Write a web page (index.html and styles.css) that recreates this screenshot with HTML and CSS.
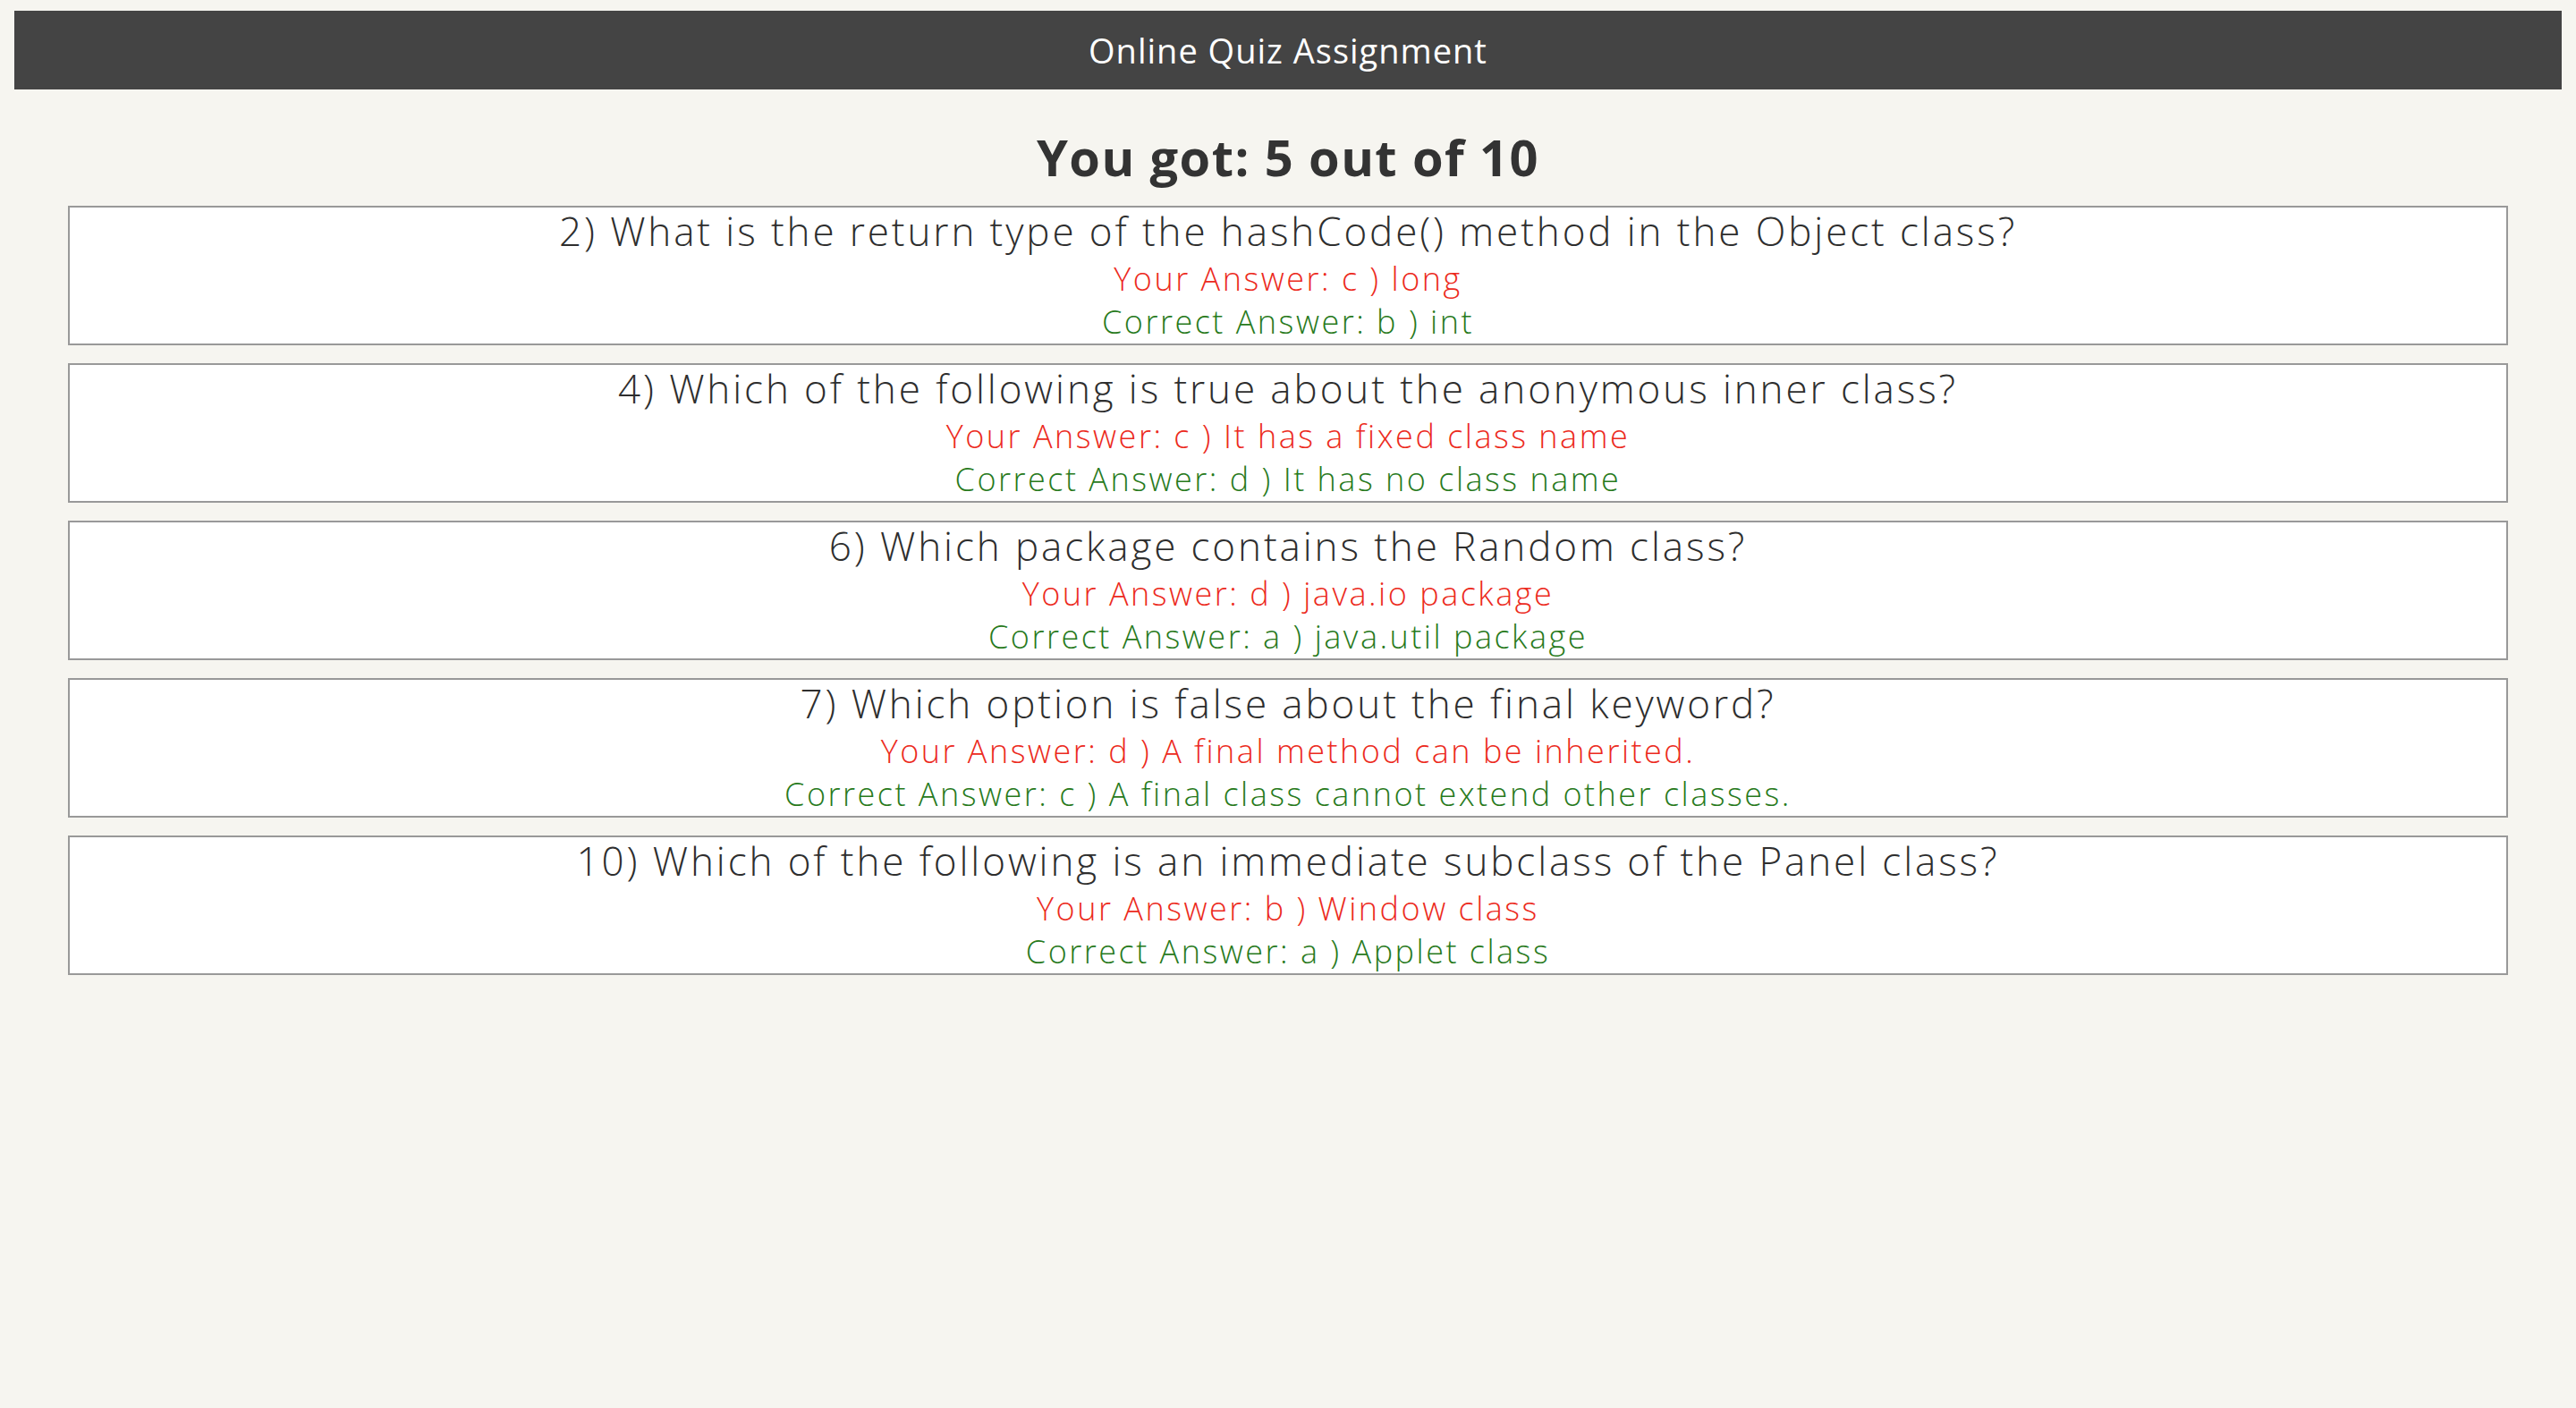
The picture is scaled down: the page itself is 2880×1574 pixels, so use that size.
FILE: index.html
```html
<!DOCTYPE html>
<html lang="en">
<head>
<meta charset="utf-8">
<title>Online Quiz Assignment</title>
<link rel="stylesheet" href="styles.css">
</head>
<body>
<header class="topbar">Online Quiz Assignment</header>
<h1 class="score">You got: 5 out of 10</h1>
<main class="results">
  <section class="result">
    <div class="question">2) What is the return type of the hashCode() method in the Object class?</div>
    <div class="answer wrong">Your Answer: c ) long</div>
    <div class="answer right">Correct Answer: b ) int</div>
  </section>
  <section class="result">
    <div class="question">4) Which of the following is true about the anonymous inner class?</div>
    <div class="answer wrong">Your Answer: c ) It has a fixed class name</div>
    <div class="answer right">Correct Answer: d ) It has no class name</div>
  </section>
  <section class="result">
    <div class="question">6) Which package contains the Random class?</div>
    <div class="answer wrong">Your Answer: d ) java.io package</div>
    <div class="answer right">Correct Answer: a ) java.util package</div>
  </section>
  <section class="result">
    <div class="question">7) Which option is false about the final keyword?</div>
    <div class="answer wrong">Your Answer: d ) A final method can be inherited.</div>
    <div class="answer right">Correct Answer: c ) A final class cannot extend other classes.</div>
  </section>
  <section class="result">
    <div class="question">10) Which of the following is an immediate subclass of the Panel class?</div>
    <div class="answer wrong">Your Answer: b ) Window class</div>
    <div class="answer right">Correct Answer: a ) Applet class</div>
  </section>
</main>
</body>
</html>
```
FILE: styles.css
```css
html, body {
  margin: 0;
  padding: 0;
}
body {
  background: #f6f5f0;
  font-family: "Open Sans", "Noto Sans", sans-serif;
  color: #333333;
  padding-top: 12px;
}
.topbar {
  margin: 0 16px;
  height: 88px;
  line-height: 88px;
  background: #444444;
  color: #ffffff;
  text-align: center;
  font-size: 38px;
  font-weight: 400;
  letter-spacing: 1px;
}
.score {
  margin: 40px 0 20px;
  font-size: 56px;
  line-height: 70px;
  font-weight: 700;
  text-align: center;
  color: #333333;
  letter-spacing: 1.4px;
}
.results {
  display: flex;
  flex-direction: column;
  gap: 20px;
  margin: 0 76px;
}
.result {
  box-sizing: border-box;
  height: 156px;
  background: #ffffff;
  border: 2px solid #999999;
  padding-top: 1px;
  text-align: center;
}
.question {
  font-size: 44px;
  line-height: 50px;
  font-weight: 300;
  margin-bottom: 5px;
  color: #2e2e2e;
  letter-spacing: 2.9px;
}
.answer {
  font-size: 36px;
  line-height: 48px;
  font-weight: 300;
  letter-spacing: 2.5px;
}
.wrong { color: #ec2a20; }
.right { color: #287a1c; }
```
